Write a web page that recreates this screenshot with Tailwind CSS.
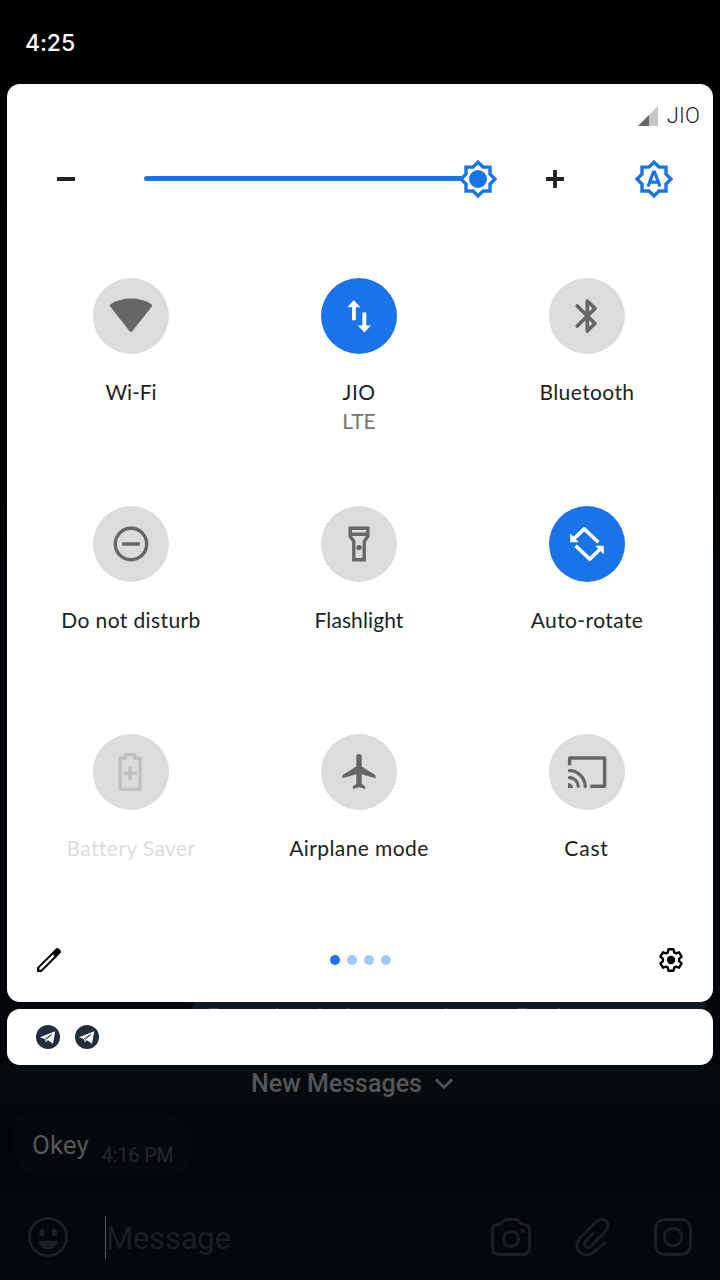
<!DOCTYPE html>
<html lang="en">
<head>
    <meta charset="UTF-8">
    <meta name="viewport" content="width=device-width, initial-scale=1.0">
    <title>Quick Settings</title>
    <script src="https://cdn.jsdelivr.net/npm/@tailwindcss/browser@4"></script>
</head>
<body class="bg-black">
    <div class="w-[720px] h-[1280px] flex flex-col overflow-hidden bg-linear-to-b from-black via-[#020609] to-[#030608] font-[Lato,sans-serif] text-[#202124]">

        <!-- Status bar -->
        <header class="h-[84px] shrink-0 bg-black flex items-center pl-[25px] pt-0.5">
            <span class="text-white font-[Inter,sans-serif] font-medium text-[23px] tracking-[-0.1px]">4:25</span>
        </header>

        <!-- Quick settings panel -->
        <main class="h-[918px] shrink-0 mx-[7px] bg-white rounded-[13px] flex flex-col">
            <div class="h-16 shrink-0 flex items-center justify-end gap-[9px] pr-[13px]">
                <svg class="w-5 h-5" viewBox="0 0 20 20">
                    <path fill="#c6c6c6" d="M0 20L20 0V20z"/>
                    <path fill="#666" d="M0 20L11 9V20z"/>
                </svg>
                <span class="font-[Roboto,sans-serif] font-[350] text-[22px] leading-7 tracking-[0.1px]">JIO</span>
            </div>

            <!-- Brightness -->
            <div class="h-[62px] shrink-0 flex items-center pl-[50px]">
                <div class="w-[18px] h-1 bg-[#202124]"></div>
                <div class="ml-[69px] w-[318px] h-[5px] -mt-px rounded-l-full bg-[#1a73e8]"></div>
                <svg class="w-10 h-10 -ml-1 shrink-0" viewBox="0 0 40 40">
                    <path fill="#fff" stroke="#1a73e8" stroke-width="3.4" d="M20 3.2L25.1 8.1H32V15.1L37 20L32 25.1V32H25.1L20 36.9L15 32H8V25.1L3 20L8 15.1V8.1H15z"/>
                    <circle cx="20" cy="20" r="9" fill="#1a73e8"/>
                </svg>
                <svg class="w-[18px] h-[18px] ml-[48px]" viewBox="0 0 18 18">
                    <path stroke="#202124" stroke-width="3.8" d="M0 9H18M9 0V18"/>
                </svg>
                <svg class="w-10 h-10 ml-[69.5px]" viewBox="0 0 40 40">
                    <path fill="#fff" stroke="#1a73e8" stroke-width="3.4" d="M20 3.2L25.1 8.1H32V15.1L37 20L32 25.1V32H25.1L20 36.9L15 32H8V25.1L3 20L8 15.1V8.1H15z"/>
                    <path fill="none" stroke="#1a73e8" stroke-width="3.2" d="M14 27.5L19.4 13H20.6L26 27.5M15.8 23.2H24.2"/>
                </svg>
            </div>

            <!-- Tiles -->
            <div class="h-[714px] shrink-0 pt-[68px] ml-[10px] w-[684px] grid grid-cols-3 grid-rows-[228px_228px_190px] text-[21px] leading-7 tracking-[0.4px] text-center">
                <div class="flex flex-col items-center">
                    <svg class="w-[76px] h-[76px] rounded-full bg-[#dcdcdc]" viewBox="0 0 76 76">
                        <path fill="#666" d="M17.4 28.8Q16.1 27.1 17.8 25.9Q26.5 20.4 38 20.4T58.2 25.9Q59.9 27.1 58.6 28.8L39.5 53Q38 55 36.5 53z"/>
                    </svg>
                    <span class="mt-6 tracking-[-0.1px]">Wi-Fi</span>
                </div>
                <div class="flex flex-col items-center">
                    <svg class="w-[76px] h-[76px] rounded-full bg-[#1a73e8]" viewBox="0 0 76 76">
                        <path fill="#fff" d="M32.8 22.3L39.4 29.2H34.8V42.3H31V29.2H26.3zM41.4 34.5H45.3V47.5H50L43.4 54.4L36.8 47.5H41.4z"/>
                    </svg>
                    <span class="mt-6">JIO</span>
                    <span class="mt-px tracking-normal text-[#737477]">LTE</span>
                </div>
                <div class="flex flex-col items-center">
                    <svg class="w-[76px] h-[76px] rounded-full bg-[#dcdcdc]" viewBox="0 0 76 76">
                        <path fill="none" stroke="#666" stroke-width="3.6" stroke-linecap="round" stroke-linejoin="round" d="M28.3 28L46 45.5L38.3 53V23L46 30.4L28.3 48"/>
                    </svg>
                    <span class="mt-6">Bluetooth</span>
                </div>

                <div class="flex flex-col items-center">
                    <svg class="w-[76px] h-[76px] rounded-full bg-[#dcdcdc]" viewBox="0 0 76 76">
                        <circle cx="38" cy="38" r="15.7" fill="none" stroke="#666" stroke-width="3.4"/>
                        <path stroke="#666" stroke-width="3.6" d="M29.2 38H46.8"/>
                    </svg>
                    <span class="mt-6">Do not disturb</span>
                </div>
                <div class="flex flex-col items-center">
                    <svg class="w-[76px] h-[76px] rounded-full bg-[#dcdcdc]" viewBox="0 0 76 76">
                        <path fill="none" stroke="#666" stroke-width="3.4" d="M29.2 22.2H46.8V30.2L43.2 35.5V53.8H32.8V35.5L29.2 30.2zM29.2 28.2H46.8"/>
                        <circle cx="38" cy="41.6" r="2.7" fill="#666"/>
                    </svg>
                    <span class="mt-6 tracking-[0.1px]">Flashlight</span>
                </div>
                <div class="flex flex-col items-center">
                    <svg class="w-[76px] h-[76px] rounded-full bg-[#1a73e8]" viewBox="0 0 76 76">
                        <path fill="none" stroke="#fff" stroke-width="3.6" stroke-linejoin="round" d="M49.4 36.2L35.2 22.9L25 32.7M26.6 39.8L40.8 53.1L51 43.3"/>
                        <path fill="#fff" d="M21.2 27.6V36.2H29.8zM54.8 48.4V39.8H46.2z"/>
                    </svg>
                    <span class="mt-6">Auto-rotate</span>
                </div>

                <div class="flex flex-col items-center">
                    <svg class="w-[76px] h-[76px] rounded-full bg-[#dcdcdc]" viewBox="0 0 76 76">
                        <path fill="none" stroke="#c1c1c1" stroke-width="3.4" stroke-linejoin="round" d="M32.4 20.8H41.8V24.2H47V55.2H27.2V24.2H32.4z"/>
                        <path stroke="#c1c1c1" stroke-width="3.4" d="M30.3 39.3H43.9M37.1 32.2V46.6"/>
                    </svg>
                    <span class="mt-6 text-[#dcdcdc]">Battery Saver</span>
                </div>
                <div class="flex flex-col items-center">
                    <svg class="w-[76px] h-[76px] rounded-full bg-[#dcdcdc]" viewBox="0 0 76 76">
                        <path fill="#666" d="M35.3 22.6a2.7 2.7 0 0 1 5.4 0V32.6L53.8 40.7Q55 41.5 54.6 44.2L40.7 40.2V49.8L44.2 52.6V55L38 53.3L31.8 55V52.6L35.3 49.8V40.2L21.4 44.2Q21 41.5 22.2 40.7L35.3 32.6z"/>
                    </svg>
                    <span class="mt-6">Airplane mode</span>
                </div>
                <div class="flex flex-col items-center">
                    <svg class="w-[76px] h-[76px] rounded-full bg-[#dcdcdc]" viewBox="0 0 76 76">
                        <path fill="none" stroke="#666" stroke-width="3.4" stroke-linejoin="round" d="M20.6 31.2V24H55.6V52.2H41.4"/>
                        <path fill="none" stroke="#666" stroke-width="3.2" stroke-linecap="round" d="M20.4 36.6A16 16 0 0 1 36.2 52.4M20.4 43.6A9 9 0 0 1 29.2 52.4"/>
                        <path fill="#666" d="M19 49A5 5 0 0 1 24 54H19z"/>
                    </svg>
                    <span class="mt-6 pr-px tracking-[0.8px]">Cast</span>
                </div>
            </div>

            <!-- Panel footer -->
            <div class="h-[72px] shrink-0 flex items-center justify-between px-[30px]">
                <svg class="w-6 h-6" viewBox="0 0 24 24">
                    <path d="M15.6 3.9L18.4 1.1Q20.3-.8 22.2 1L23 1.8Q24.9 3.7 23 5.6L20.2 8.4L4.6 24H0V19.4z"/>
                    <path fill="#fff" d="M15.8 6.5L17.5 8.2L4 21.7H2.3V20z"/>
                </svg>
                <div class="flex gap-[7px]">
                    <span class="w-[10px] h-[10px] rounded-full bg-[#1a73e8]"></span>
                    <span class="w-[10px] h-[10px] rounded-full bg-[#a3c7f6]"></span>
                    <span class="w-[10px] h-[10px] rounded-full bg-[#a3c7f6]"></span>
                    <span class="w-[10px] h-[10px] rounded-full bg-[#a3c7f6]"></span>
                </div>
                <svg class="w-6 h-6" viewBox="0 0 24 24">
                    <path fill="none" stroke="#000" stroke-width="2.4" stroke-linejoin="round" d="M9.5 1.2H14.5L15.2 4.4L16.9 5.4L20.1 4.3L22.6 8.6L20.1 10.9V13.1L22.6 15.4L20.1 19.7L16.9 18.6L15.2 19.6L14.5 22.8H9.5L8.8 19.6L7.1 18.6L3.9 19.7L1.4 15.4L3.9 13.1V10.9L1.4 8.6L3.9 4.3L7.1 5.4L8.8 4.4z"/>
                    <circle cx="12" cy="12" r="4.2"/>
                </svg>
            </div>
        </main>

        <!-- Chat bubble showing between the two cards -->
        <svg class="w-[720px] h-[7px] shrink-0" viewBox="0 0 720 7">
            <path fill="#101822" d="M194 0H706V7H191Q191 3 194 0z"/>
            <path stroke="#3b4148" d="M209 6.5H218M276 6.5H278M319 6.5H321M347 6.5H349M445 6.5H447M518 6.5H527M558 6.5H560"/>
        </svg>

        <!-- Notification icons -->
        <section class="h-14 shrink-0 mx-[7px] bg-white rounded-[13px] flex items-center gap-[15px] pl-[29px]">
            <svg class="w-6 h-6" viewBox="0 0 24 24">
                <circle cx="12" cy="12" r="12" fill="#232e3c"/>
                <path fill="#fff" d="M4 12.3L19.2 6.2L17 18.7L12 15.3L9.6 17.6L8.7 14.1z"/>
                <path fill="none" stroke="#232e3c" stroke-width=".8" d="M9 13.9L15.5 9.4L10.3 14.6L9.8 16.6"/>
            </svg>
            <svg class="w-6 h-6" viewBox="0 0 24 24">
                <circle cx="12" cy="12" r="12" fill="#232e3c"/>
                <path fill="#fff" d="M4 12.3L19.2 6.2L17 18.7L12 15.3L9.6 17.6L8.7 14.1z"/>
                <path fill="none" stroke="#232e3c" stroke-width=".8" d="M9 13.9L15.5 9.4L10.3 14.6L9.8 16.6"/>
            </svg>
        </section>

        <!-- Dimmed chat behind the shade -->
        <div class="grow flex flex-col font-[Roboto,sans-serif]">
            <div class="h-10 shrink-0 bg-[#070b0e] flex justify-center gap-[13px] pt-px pr-4 text-[#555657]">
                <span class="text-[25px] leading-[35px] font-medium">New Messages</span>
                <svg class="w-[18px] h-3 mt-3" viewBox="0 0 18 12">
                    <path fill="none" stroke="currentColor" stroke-width="2.6" d="M1 1.5L9 9.5L17 1.5"/>
                </svg>
            </div>
            <div class="h-[89px] shrink-0 pt-2 pl-[14px]">
                <div class="w-[179px] h-16 rounded-[30px] rounded-tl-[14px] bg-[#05090d] flex pl-[18px]">
                    <span class="text-[26px] leading-[65px] text-[#565757]">Okey</span>
                    <span class="ml-[13px] mt-[33px] text-[19.5px] leading-5 text-[#25282b] whitespace-nowrap">4:16 PM</span>
                </div>
            </div>
            <div class="grow bg-[#05080b] flex items-center pl-7 pr-[28px] text-[#1c1e21]">
                <svg class="w-10 h-10" viewBox="0 0 40 40" fill="currentColor">
                    <circle cx="20" cy="20" r="18.6" fill="none" stroke="currentColor" stroke-width="2.8"/>
                    <ellipse cx="14" cy="15.5" rx="2.7" ry="3.9"/>
                    <ellipse cx="26.4" cy="15.5" rx="2.7" ry="3.9"/>
                    <path d="M10 24H30Q28 32.5 20 32.5T10 24z"/>
                </svg>
                <div class="ml-[37px] w-px h-[43px] bg-[#58595a]"></div>
                <span class="text-[31px] tracking-[-0.2px] leading-none mt-0.5 grow">Message</span>
                <svg class="w-10 h-[38px]" viewBox="0 0 40 38" fill="none" stroke="currentColor" stroke-width="3">
                    <path d="M7.5 6.5Q9.6 6.3 11 4.4Q13.2 1.5 15.5 1.5H24.5Q26.8 1.5 29 4.4Q30.4 6.3 32.5 6.5Q38.5 6.8 38.5 12.5V29.5Q38.5 36.5 31.5 36.5H8.5Q1.5 36.5 1.5 29.5V12.5Q1.5 6.8 7.5 6.5z"/>
                    <circle cx="20" cy="21" r="7.6"/>
                    <circle cx="31.5" cy="12.7" r="2.2" fill="currentColor" stroke="none"/>
                </svg>
                <svg class="w-9 h-10 ml-[44px]" viewBox="0 0 36 40" fill="none" stroke="currentColor" stroke-width="2.9">
                    <path d="M18.5 15.5L10.8 24Q8.2 27.5 10.5 29.7Q13.2 32 16.2 29L30.5 14.5Q35.5 8.8 31.3 4.2Q26.5 0 21 4.8L5.5 20.5Q-1.5 28.5 4.5 35Q11.5 41.5 20 34L30.5 25.5" stroke-linejoin="round"/>
                </svg>
                <svg class="w-[38px] h-[38px] ml-[43px]" viewBox="0 0 38 38" fill="none" stroke="currentColor" stroke-width="3">
                    <rect x="1.5" y="1.5" width="35" height="35" rx="9"/>
                    <circle cx="19" cy="19" r="8.8"/>
                </svg>
            </div>
        </div>
    </div>
</body>
</html>
